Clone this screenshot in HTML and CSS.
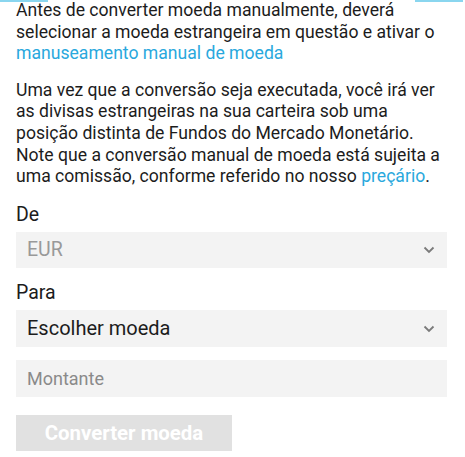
FILE: index.html
```html
<!DOCTYPE html>
<html lang="pt">
<head>
    <meta charset="UTF-8">
    <meta name="viewport" content="width=device-width, initial-scale=1.0">
    <title>Converter moeda</title>
    <link rel="stylesheet" href="styles.css">
</head>
<body>
    <div class="edge edge-left"></div>
    <div class="edge edge-right"></div>

    <div class="content">
        <p class="intro">Antes de converter moeda manualmente, deverá selecionar a moeda estrangeira em questão e ativar o <a href="#">manuseamento manual de moeda</a></p>
        <p class="intro">Uma vez que a conversão seja executada, você irá ver as divisas estrangeiras na sua carteira sob uma posição distinta de Fundos do Mercado Monetário. Note que a conversão manual de moeda está sujeita a uma comissão, conforme referido no nosso <a href="#">preçário</a>.</p>

        <div class="field">
            <div class="label">De</div>
            <div class="select disabled">
                <span>EUR</span>
                <svg class="chevron" width="12" height="8" viewBox="0 0 12 8"><path d="M1.5 1.5 L6 6 L10.5 1.5" fill="none" stroke="#7a7a7a" stroke-width="1.8"/></svg>
            </div>
        </div>

        <div class="field">
            <div class="label">Para</div>
            <div class="select">
                <span>Escolher moeda</span>
                <svg class="chevron" width="12" height="8" viewBox="0 0 12 8"><path d="M1.5 1.5 L6 6 L10.5 1.5" fill="none" stroke="#7a7a7a" stroke-width="1.8"/></svg>
            </div>
        </div>

        <div class="input">Montante</div>

        <button class="btn" disabled>Converter moeda</button>
    </div>
</body>
</html>
```

FILE: styles.css
```css
body {
    margin: 0;
    background: #fff;
    font-family: Roboto, "Liberation Sans", sans-serif;
    color: #1c1c1c;
}
.edge {
    position: absolute;
    top: 0;
    height: 2px;
    width: 48px;
    background: #8ad6ef;
}
.edge-left { left: 0; }
.edge-right { left: 415px; }
.content {
    padding: 0 16px 0 16px;
}
.intro {
    margin: 0 0 15px;
    font-size: 17.6px;
    line-height: 21.6px;
}
.intro a {
    color: #29a8dd;
    text-decoration: none;
}
.field {
    margin-top: 16px;
}
.field + .field {
    margin-top: 14px;
}
.label {
    font-size: 19.5px;
    line-height: 22px;
    margin-bottom: 6px;
}
.select, .input {
    display: flex;
    align-items: center;
    justify-content: space-between;
    width: 408px;
    height: 37px;
    padding: 0 12px 0 11px;
    background: #f3f3f3;
    font-size: 20px;
}
.select.disabled {
    height: 36px;
    color: #999;
    font-size: 19.5px;
}
.chevron { margin-top: 1px; }
.input {
    margin-top: 13px;
    color: #8a8a8a;
    font-size: 18px;
}
.btn {
    display: block;
    margin-top: 18px;
    width: 216px;
    height: 36px;
    border: 0;
    background: #e1e1e1;
    color: #fff;
    font-family: Roboto, "Liberation Sans", sans-serif;
    font-size: 20.4px;
    font-weight: bold;
}
```
